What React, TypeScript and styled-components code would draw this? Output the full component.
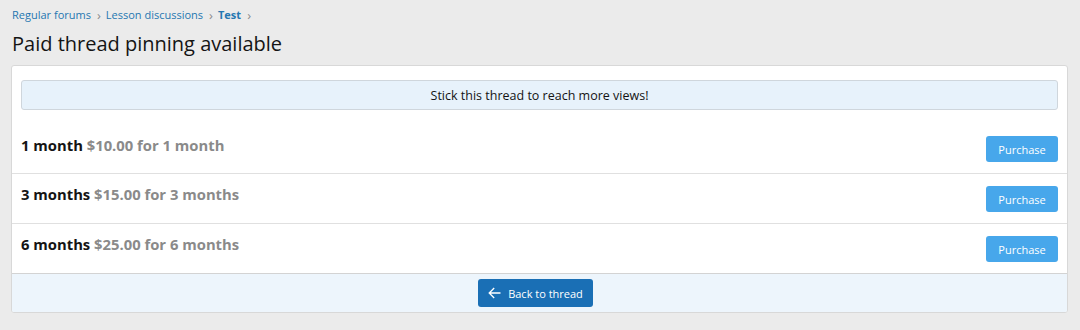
import styled, { createGlobalStyle } from 'styled-components';

const GlobalStyle = createGlobalStyle`
  html, body {
    margin: 0;
    padding: 0;
    background: #ebebeb;
    font-family: 'Open Sans', 'Noto Sans', sans-serif;
    color: #141414;
  }
`;

const Page = styled.div`
  padding: 6px 12px 0 11px;
  width: 1080px;
  box-sizing: border-box;
`;

const Crumbs = styled.ul`
  display: flex;
  align-items: center;
  list-style: none;
  margin: 0 0 0 1px;
  padding: 0;
  font-size: 11px;
  line-height: 18px;
`;

const Crumb = styled.li<{ $current?: boolean }>`
  color: #2577b1;
  font-weight: ${(p) => (p.$current ? 700 : 400)};
  display: flex;
  align-items: center;

  &::after {
    content: '›';
    color: #8c8c8c;
    font-size: 13px;
    margin: 0 5px 0 6px;
    font-weight: 400;
  }
`;

const Title = styled.h1`
  margin: 6px 0 8px 1px;
  font-size: 20px;
  font-weight: 400;
  line-height: 27px;
`;

const Block = styled.div`
  background: #fff;
  border: 1px solid #d8d8d8;
  border-radius: 3px;
  overflow: hidden;
`;

const Notice = styled.div`
  margin: 14px 9px 0 9px;
  height: 30px;
  box-sizing: border-box;
  background: #e7f2fb;
  border: 1px solid #cfd6dc;
  border-radius: 3px;
  display: flex;
  align-items: center;
  justify-content: center;
  font-size: 12.5px;
`;

const Row = styled.div<{ $first?: boolean }>`
  display: flex;
  justify-content: space-between;
  align-items: flex-start;
  height: ${(p) => (p.$first ? 63 : 50)}px;
  padding: ${(p) => (p.$first ? 26 : 12)}px 9px 0 9px;
  box-sizing: border-box;
  border-top: ${(p) => (p.$first ? 'none' : '1px solid #e0e0e0')};
`;

const Label = styled.div<{ $first?: boolean }>`
  font-size: 14.8px;
  font-weight: 700;
  line-height: 18px;
  margin-top: ${(p) => (p.$first ? 0 : -1)}px;
`;

const Cost = styled.span`
  color: #8a8a8a;
`;

const PurchaseButton = styled.button`
  width: 72px;
  height: 26px;
  border: none;
  border-radius: 3px;
  background: #47a7eb;
  color: #fff;
  font-family: inherit;
  font-size: 11px;
  padding: 0;
  cursor: pointer;
`;

const Footer = styled.div`
  border-top: 1px solid #d3d3d3;
  background: #edf5fc;
  height: 38px;
  padding-right: 8px;
  display: flex;
  align-items: center;
  justify-content: center;
`;

const BackButton = styled.button`
  display: flex;
  align-items: center;
  gap: 7px;
  height: 28px;
  padding: 0 10px;
  border: none;
  border-radius: 3px;
  background: #1a6fb5;
  color: #fff;
  font-family: inherit;
  font-size: 11px;
  cursor: pointer;
`;

const plans = [
  { term: '1 month', cost: '$10.00 for 1 month' },
  { term: '3 months', cost: '$15.00 for 3 months' },
  { term: '6 months', cost: '$25.00 for 6 months' },
];

export default function App() {
  return (
    <>
      <GlobalStyle />
      <Page>
        <Crumbs>
          <Crumb>Regular forums</Crumb>
          <Crumb>Lesson discussions</Crumb>
          <Crumb $current>Test</Crumb>
        </Crumbs>
        <Title>Paid thread pinning available</Title>
        <Block>
          <Notice>Stick this thread to reach more views!</Notice>
          {plans.map((p, i) => (
            <Row key={p.term} $first={i === 0}>
              <Label $first={i === 0}>
                {p.term} <Cost>{p.cost}</Cost>
              </Label>
              <PurchaseButton>Purchase</PurchaseButton>
            </Row>
          ))}
          <Footer>
            <BackButton>
              <svg width="13" height="12" viewBox="0 0 13 12" fill="none" stroke="#fff" strokeWidth="1.3">
                <path d="M12.5 6H1.2M6.2 1 1.2 6l5 5" />
              </svg>
              Back to thread
            </BackButton>
          </Footer>
        </Block>
      </Page>
    </>
  );
}
